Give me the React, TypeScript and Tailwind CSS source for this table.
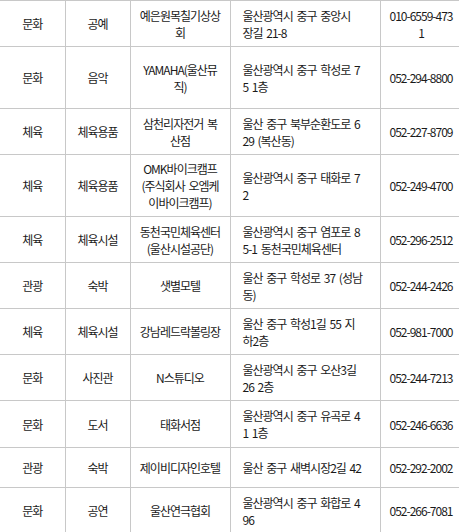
import React from 'react';

type Row = {
  cat: string;
  sub: string;
  name: string[];
  addr: string[];
  tel: string[];
  h: string;
};

const rows: Row[] = [
  { cat: '문화', sub: '공예', name: ['예은원목칠기상상', '회'], addr: ['울산광역시 중구 중앙시', '장길 21-8'], tel: ['010-6559-473', '1'], h: 'h-[46px]' },
  { cat: '문화', sub: '음악', name: ['YAMAHA(울산뮤', '직)'], addr: ['울산광역시 중구 학성로 7', '5 1층'], tel: ['052-294-8800'], h: 'h-[62px]' },
  { cat: '체육', sub: '체육용품', name: ['삼천리자전거 복', '산점'], addr: ['울산 중구 북부순환도로 6', '29 (복산동)'], tel: ['052-227-8709'], h: 'h-[46px]' },
  { cat: '체육', sub: '체육용품', name: ['OMK바이크캠프', '(주식회사 오엠케', '이바이크캠프)'], addr: ['울산광역시 중구 태화로 7', '2'], tel: ['052-249-4700'], h: 'h-[62px]' },
  { cat: '체육', sub: '체육시설', name: ['동천국민체육센터', '(울산시설공단)'], addr: ['울산광역시 중구 염포로 8', '5-1 동천국민체육센터'], tel: ['052-296-2512'], h: 'h-[46px]' },
  { cat: '관광', sub: '숙박', name: ['샛별모텔'], addr: ['울산 중구 학성로 37 (성남', '동)'], tel: ['052-244-2426'], h: 'h-[46px]' },
  { cat: '체육', sub: '체육시설', name: ['강남레드락볼링장'], addr: ['울산 중구 학성1길 55 지', '하2층'], tel: ['052-981-7000'], h: 'h-[46px]' },
  { cat: '문화', sub: '사진관', name: ['N스튜디오'], addr: ['울산광역시 중구 오산3길', '26 2층'], tel: ['052-244-7213'], h: 'h-[46px]' },
  { cat: '문화', sub: '도서', name: ['태화서점'], addr: ['울산광역시 중구 유곡로 4', '1 1층'], tel: ['052-246-6636'], h: 'h-[47px]' },
  { cat: '관광', sub: '숙박', name: ['제이비디자인호텔'], addr: ['울산 중구 새벽시장2길 42'], tel: ['052-292-2002'], h: 'h-[40px]' },
  { cat: '문화', sub: '공연', name: ['울산연극협회'], addr: ['울산광역시 중구 화합로 4', '96'], tel: ['052-266-7081'], h: 'h-[46px]' },
];

// 줄바꿈은 원본 화면과 같게 맞춤
const Lines = ({ lines }: { lines: string[] }) => (
  <>
    {lines.map((l, i) => (
      <React.Fragment key={i}>
        {i > 0 && <br />}
        {l}
      </React.Fragment>
    ))}
  </>
);

const App: React.FC = () => {
  return (
    <div className="w-[459px] h-[532px] overflow-hidden bg-white">
      <table
        className="table-fixed border-collapse w-[462px] text-[12px] leading-[17px] tracking-[-1px] [word-spacing:2px] text-[#1a1a1a]"
        style={{ fontFamily: '"Noto Sans CJK KR", "Noto Sans", sans-serif' }}
      >
        <colgroup>
          <col className="w-[65px]" />
          <col className="w-[65px]" />
          <col className="w-[100px]" />
          <col className="w-[150px]" />
          <col className="w-[82px]" />
        </colgroup>
        <tbody>
          {rows.map((r, i) => (
            <tr key={i} className={r.h}>
              <td className="border-t border-b border-r border-[#c8c8c8] text-center align-middle px-1 whitespace-nowrap">{r.cat}</td>
              <td className="border border-[#c8c8c8] text-center align-middle px-1 whitespace-nowrap">{r.sub}</td>
              <td className="border border-[#c8c8c8] text-center align-middle px-1 whitespace-nowrap">
                <Lines lines={r.name} />
              </td>
              <td className="border border-[#c8c8c8] text-left align-middle px-3 whitespace-nowrap">
                <Lines lines={r.addr} />
              </td>
              <td className="border border-[#c8c8c8] text-center align-middle px-1 whitespace-nowrap">
                <Lines lines={r.tel} />
              </td>
            </tr>
          ))}
        </tbody>
      </table>
    </div>
  );
};

export default App;
